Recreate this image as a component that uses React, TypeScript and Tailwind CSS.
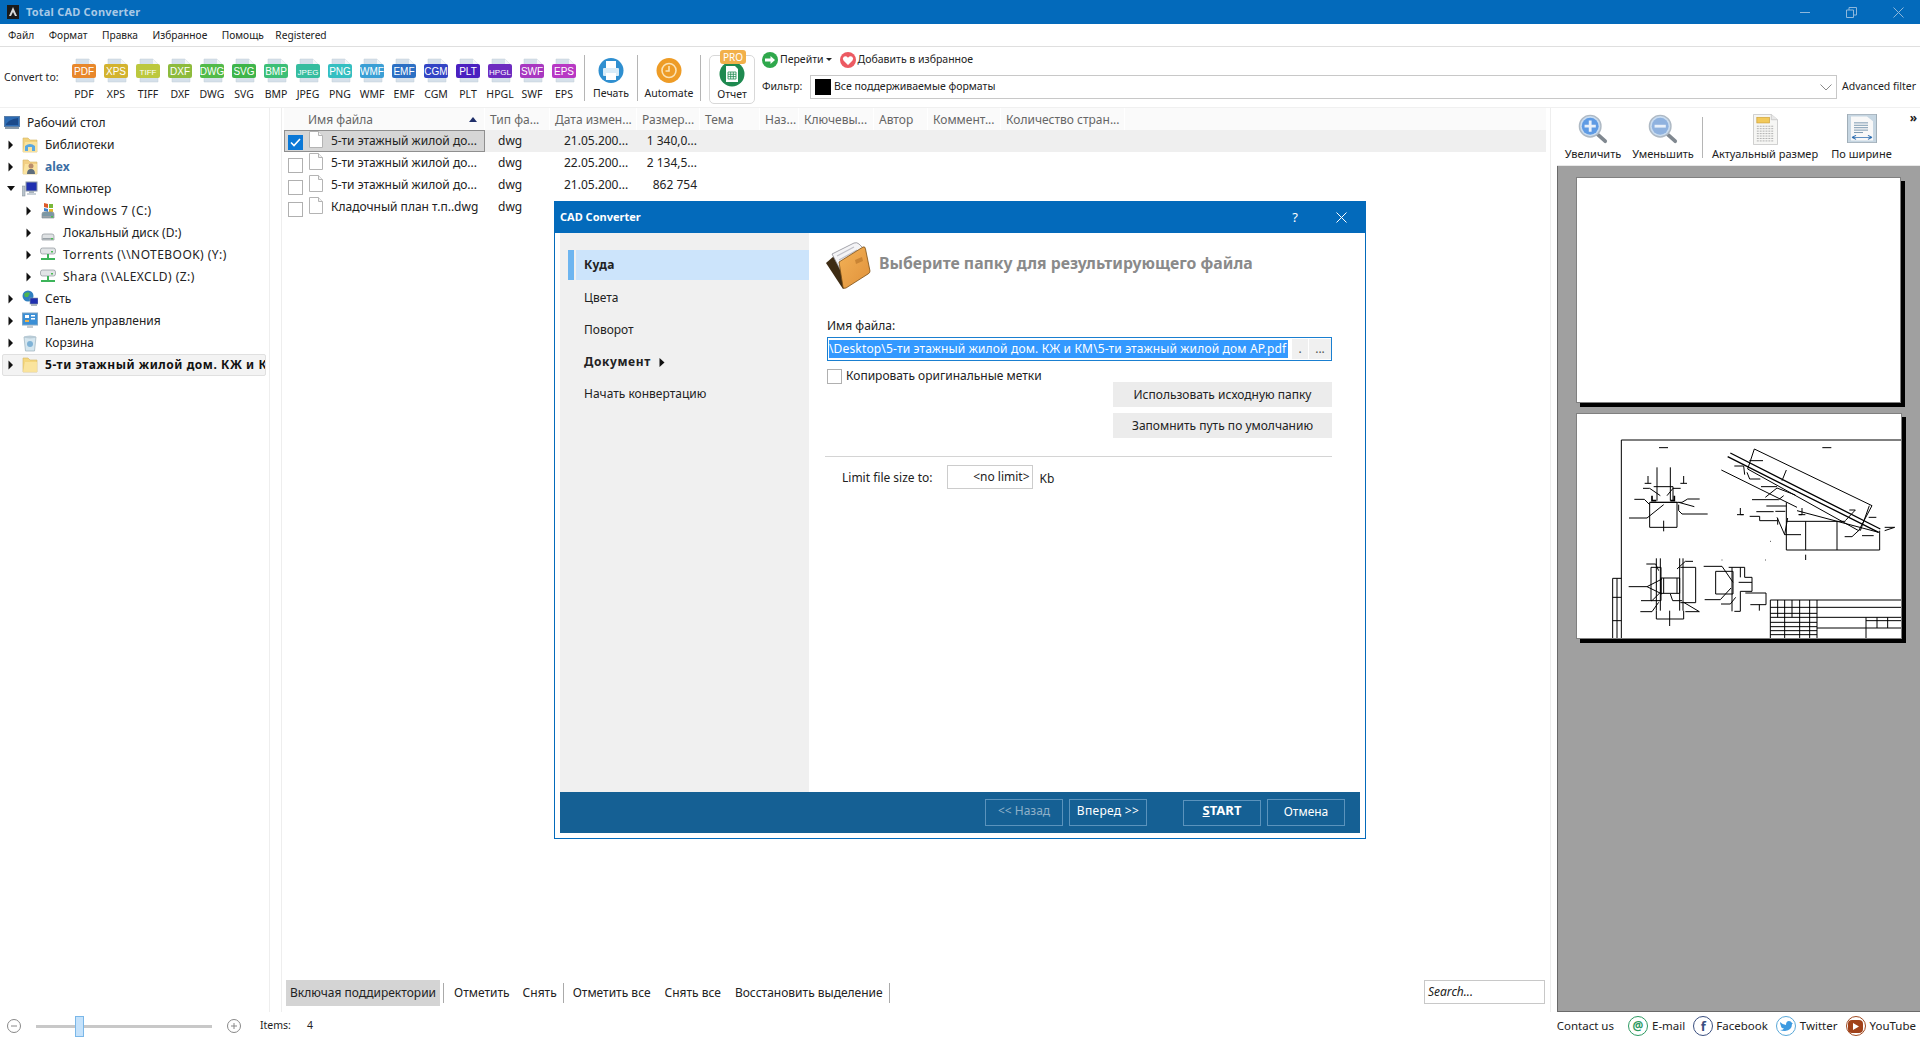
import React from "react"

const formats = [
  { name: "PDF", color: "#e8872b" },
  { name: "XPS", color: "#d3b32f" },
  { name: "TIFF", color: "#bcc83e" },
  { name: "DXF", color: "#8dbb3d" },
  { name: "DWG", color: "#52ba49" },
  { name: "SVG", color: "#3fb54b" },
  { name: "BMP", color: "#3cbf76" },
  { name: "JPEG", color: "#36bd9f" },
  { name: "PNG", color: "#34bfc1" },
  { name: "WMF", color: "#3b9fd5" },
  { name: "EMF", color: "#2d70c4" },
  { name: "CGM", color: "#3344c4" },
  { name: "PLT", color: "#4a20c0" },
  { name: "HPGL", color: "#6d2bc0" },
  { name: "SWF", color: "#a838c0" },
  { name: "EPS", color: "#b838c4" },
]

const columns = ["Имя файла", "Тип фа...", "Дата измен...", "Размер...", "Тема", "Наз...", "Ключевы...", "Автор", "Коммент...", "Количество стран..."]

const files = [
  { name: "5-ти этажный жилой до...", date: "21.05.200...", size: "1 340,0...", checked: true },
  { name: "5-ти этажный жилой до...", date: "22.05.200...", size: "2 134,5...", checked: false },
  { name: "5-ти этажный жилой до...", date: "21.05.200...", size: "862 754", checked: false },
  { name: "Кладочный план т.п..dwg", date: "", size: "", checked: false },
]

const FormatIcon = ({ name, color }: { name: string; color: string }) => (
  <svg width="26" height="25" viewBox="0 0 26 25">
    <path d="M5 1H18L23 6V24H5Z" fill="#d5e0ea" stroke="#c3ccd4" strokeWidth="0.5" />
    <path d="M18 1V6H23Z" fill="#f4f6f8" />
    <rect x="1" y="6" width="24" height="14" rx="2" fill={color} />
    <text x="13" y="17" textAnchor="middle" fontSize={name.length > 3 ? 8 : 10} fill="#fff" fontFamily="'Liberation Sans', sans-serif">{name}</text>
  </svg>
)

const Arrow = ({ open = false }: { open?: boolean }) => (
  <svg width="8" height="10" viewBox="0 0 8 10" className="shrink-0">
    {open ? <path d="M0 2H8L4 7Z" fill="#111" /> : <path d="M1.5 0.5L6 5L1.5 9.5Z" fill="#111" />}
  </svg>
)

const FolderIcon = ({ tint = "#f5d77e", children }: { tint?: string; children?: React.ReactNode }) => (
  <svg width="16" height="18" viewBox="0 0 16 18">
    <path d="M1 2H6L8 4H15V16H1Z" fill={tint} stroke="#d3b566" strokeWidth="0.6" />
    <path d="M1 16L3 6H15V16Z" fill="#fbe7a6" opacity="0.8" />
    {children}
  </svg>
)

const DesktopIcon = () => (
  <svg width="16" height="14" viewBox="0 0 16 14">
    <rect x="0.5" y="0.5" width="15" height="10" fill="#2d6cb4" stroke="#5a7ea8" />
    <path d="M2 8C5 4 9 3 14 2V9H2Z" fill="#1c4a8a" />
    <rect x="1" y="11" width="14" height="2" fill="#8b9aa8" />
  </svg>
)

const LibIcon = () => (
  <FolderIcon tint="#f2d27c">
    <path d="M3 15V10Q8 6 13 10V15H10V11H6V15Z" fill="#5aa7e0" />
  </FolderIcon>
)

const UserIcon = () => (
  <FolderIcon tint="#f2cf85">
    <circle cx="9" cy="8" r="2.5" fill="#b98d6c" />
    <path d="M5 16Q5 11 9 11Q13 11 13 16Z" fill="#5e6d7c" />
  </FolderIcon>
)

const ComputerIcon = () => (
  <svg width="16" height="16" viewBox="0 0 16 16">
    <rect x="0.5" y="5" width="2.5" height="10" fill="#b9c3cc" stroke="#7f8b96" strokeWidth="0.5" />
    <rect x="4" y="1" width="11" height="9" fill="#1f2fb0" stroke="#8b98a6" />
    <rect x="7" y="10" width="5" height="2" fill="#aab4bd" />
    <rect x="5" y="12" width="9" height="2" fill="#c9d1d8" />
  </svg>
)

const DriveIcon = ({ windows = false }: { windows?: boolean }) => (
  <svg width="16" height="18" viewBox="0 0 16 18">
    {windows && (
      <g>
        <path d="M4 1L8 2V6L4 5Z" fill="#dd5a2a" />
        <path d="M9 2L13 2V6L9 6Z" fill="#79b83a" />
        <path d="M4 6L8 7V10L4 9Z" fill="#3d82cc" />
        <path d="M9 7L13 7V10L9 10Z" fill="#e8b92a" />
      </g>
    )}
    <path d="M2 12Q2 10 4 10H12Q14 10 14 12V16H2Z" fill={windows ? "#7b98a5" : "#dfe2e4"} stroke="#8d9499" strokeWidth="0.7" />
    <rect x="2.5" y="14" width="11" height="1.5" fill="#9aa2a8" />
    <rect x="11" y="14" width="2" height="1.5" fill="#4bbd52" />
  </svg>
)

const NetDriveIcon = () => (
  <svg width="16" height="16" viewBox="0 0 16 16">
    <rect x="0.5" y="1" width="15" height="6" rx="2" fill="#e1e4e6" stroke="#8d9499" strokeWidth="0.7" />
    <rect x="11" y="4" width="2" height="1.5" fill="#4bbd52" />
    <path d="M7 7H9V11H15V13H1V11H7Z" fill="#3db45a" />
  </svg>
)

const NetworkIcon = () => (
  <svg width="16" height="18" viewBox="0 0 16 18">
    <circle cx="6" cy="6" r="5.5" fill="#2f7fc0" />
    <path d="M2 4Q5 1 8 3L6 7L3 7Z" fill="#4db54e" />
    <rect x="8" y="8" width="8" height="6" fill="#1f2fb0" stroke="#8b98a6" strokeWidth="0.6" />
    <rect x="9" y="14" width="6" height="2" fill="#aab4bd" />
  </svg>
)

const PanelIcon = () => (
  <svg width="16" height="18" viewBox="0 0 16 18">
    <rect x="0.5" y="1" width="15" height="12" fill="#3b8fd6" stroke="#7ea6c6" />
    <rect x="3" y="3" width="4" height="3" fill="#fff" />
    <rect x="9" y="3" width="4" height="1.5" fill="#fff" />
    <rect x="9" y="6" width="4" height="1.5" fill="#fff" />
    <rect x="3" y="8" width="4" height="2" fill="#f0b44a" />
    <rect x="5" y="13" width="6" height="3" fill="#c4ccd3" />
  </svg>
)

const BinIcon = () => (
  <svg width="16" height="18" viewBox="0 0 16 18">
    <path d="M2 3H14L12.5 17H3.5Z" fill="#d5e6ef" stroke="#9bb0bc" strokeWidth="0.7" />
    <ellipse cx="8" cy="3" rx="6" ry="1.5" fill="#b8cbd6" />
    <circle cx="8" cy="10" r="3" fill="#7fb2d6" />
  </svg>
)

const tree = [
  { label: "Рабочий стол", icon: <DesktopIcon />, level: 0, noArrow: true },
  { label: "Библиотеки", icon: <LibIcon />, level: 1 },
  { label: "alex", icon: <UserIcon />, level: 1, accent: true },
  { label: "Компьютер", icon: <ComputerIcon />, level: 1, open: true },
  { label: "Windows 7 (C:)", icon: <DriveIcon windows />, level: 2, wide: true },
  { label: "Локальный диск (D:)", icon: <DriveIcon />, level: 2 },
  { label: "Torrents (\\\\NOTEBOOK) (Y:)", icon: <NetDriveIcon />, level: 2, wide: true },
  { label: "Shara (\\\\ALEXCLD) (Z:)", icon: <NetDriveIcon />, level: 2, wide: true },
  { label: "Сеть", icon: <NetworkIcon />, level: 1 },
  { label: "Панель управления", icon: <PanelIcon />, level: 1 },
  { label: "Корзина", icon: <BinIcon />, level: 1 },
]

const TreeRow = ({ label, icon, level, noArrow, open, accent, wide }: { label: string; icon: React.ReactNode; level: number; noArrow?: boolean; open?: boolean; accent?: boolean; wide?: boolean }) => (
  <div className={`flex h-[22px] items-center ${level === 2 ? "pl-[25px]" : level === 1 ? "pl-[7px]" : "pl-[4px]"}`}>
    {!noArrow && <Arrow open={open} />}
    <span className={`flex w-[16px] justify-center ${noArrow ? "" : "ml-[7px]"}`}>{icon}</span>
    <span className={`ml-[7px] whitespace-nowrap ${wide ? "tracking-[0.45px]" : ""} ${accent ? "font-bold text-[#3a6ea5]" : "text-[#222]"}`}>{label}</span>
  </div>
)

const FileGlyph = () => (
  <svg width="14" height="17" viewBox="0 0 14 17" className="block shrink-0">
    <path d="M0.5 0.5H9.5L13.5 4.5V16.5H0.5Z" fill="#fff" stroke="#b4b4b4" />
    <path d="M9.5 0.5V4.5H13.5" fill="#f2f2f2" stroke="#b4b4b4" />
  </svg>
)

const Check = ({ checked }: { checked: boolean }) =>
  checked ? (
    <span className="flex h-[15px] w-[15px] shrink-0 items-center justify-center bg-[#0a78d7]">
      <svg width="11" height="9" viewBox="0 0 11 9"><path d="M1 4.5L4 7.5L10 1" fill="none" stroke="#fff" strokeWidth="1.6" /></svg>
    </span>
  ) : (
    <span className="block h-[15px] w-[15px] shrink-0 border border-[#b0b0b0] bg-white" />
  )

const Magnifier = ({ plus }: { plus: boolean }) => (
  <svg width="30" height="30" viewBox="0 0 32 32">
    <path d="M20 21L29 29" stroke="#808890" strokeWidth="4" strokeLinecap="round" />
    <circle cx="13" cy="13" r="11.5" fill="#c9dcf0" stroke="#aeb9c4" strokeWidth="1.5" />
    <circle cx="13" cy="13" r="9" fill={plus ? "#5f9be4" : "#8fb2df"} />
    <path d={plus ? "M7 13H19M13 7V19" : "M7 13H19"} stroke="#e8f0fa" strokeWidth="3" />
  </svg>
)

const ActualSizeIcon = () => (
  <svg width="25" height="31" viewBox="0 0 26 38" preserveAspectRatio="none">
    <path d="M0.5 0.5H19L25.5 7V37.5H0.5Z" fill="#f6f6f4" stroke="#c8c8c8" />
    <path d="M19 0.5V7H25.5" fill="#e8e8e8" stroke="#c8c8c8" />
    <rect x="4" y="4" width="13" height="7" fill="#f2c95a" stroke="#c89b32" strokeWidth="0.7" />
    <path d="M4 15H22M4 18H22M4 21H22M4 24H22M4 27H22M4 30H22M4 33H22" stroke="#a8a8a8" strokeWidth="1" strokeDasharray="2 1" />
  </svg>
)

const FitWidthIcon = () => (
  <svg width="30" height="29" viewBox="0 0 30 36" preserveAspectRatio="none">
    <rect x="0.5" y="0.5" width="29" height="35" fill="#c6d6e2" stroke="#a0aeb8" />
    <path d="M4 3H20L26 9V33H4Z" fill="#f8f8f8" />
    <path d="M7 11H21M7 14H21M7 17H21M7 20H21M7 23H16" stroke="#6f8fa8" strokeWidth="1" />
    <path d="M5 29H25M5 29L9 26.5M5 29L9 31.5M25 29L21 26.5M25 29L21 31.5" stroke="#2b6cb0" strokeWidth="1.2" fill="none" />
  </svg>
)

const PrintIcon = () => (
  <svg width="26" height="30" viewBox="0 0 26 30">
    <circle cx="13" cy="14.500" r="12.500" fill="#2f8fd0" />
    <rect x="8" y="5" width="10" height="7" fill="#fff" />
    <rect x="5" y="12" width="16" height="8" rx="1" fill="#d9ecf8" />
    <rect x="8" y="17" width="10" height="7" fill="#fff" />
  </svg>
)

const AutomateIcon = () => (
  <svg width="26" height="30" viewBox="0 0 26 30">
    <circle cx="13" cy="14.500" r="12.500" fill="#ee9c26" />
    <circle cx="13" cy="14.500" r="7" fill="none" stroke="#fbe3b5" strokeWidth="1.600" />
    <path d="M13 10V15H9.500" fill="none" stroke="#fbe3b5" strokeWidth="1.600" />
  </svg>
)

const ReportIcon = () => (
  <svg width="26" height="26" viewBox="0 0 26 26">
    <circle cx="13" cy="13" r="12.500" fill="#1f8a50" />
    <path d="M7 5H16L19 8V21H7Z" fill="#fff" />
    <path d="M9 11H17V18H9ZM9 13.300H17M9 15.600H17M11.700 11V18M14.300 11V18" fill="none" stroke="#1f8a50" strokeWidth="0.8" />
  </svg>
)

const GoIcon = () => (
  <svg width="16" height="16" viewBox="0 0 16 16">
    <circle cx="8" cy="8" r="8" fill="#2fa84c" />
    <path d="M3 6.500H8.500V4L13 8L8.500 12V9.500H3Z" fill="#fff" />
  </svg>
)

const HeartIcon = () => (
  <svg width="16" height="16" viewBox="0 0 16 16" className="block">
    <circle cx="8" cy="8" r="8" fill="#ec5a62" />
    <path d="M8 13L3.500 8.500Q2 6.500 3.800 4.800Q6 3.500 8 5.800Q10 3.500 12.200 4.800Q14 6.500 12.500 8.500Z" fill="#fff" />
  </svg>
)

const TitleLogo = () => (
  <svg width="12" height="14" viewBox="0 0 12 14">
    <rect width="12" height="14" fill="#1a1a1a" />
    <path d="M6 2L2 11H4L6 7L8 11H10Z" fill="#d8d8d8" />
  </svg>
)

const BigFolder = () => (
  <svg width="46" height="50" viewBox="0 0 46 50">
    <defs>
      <linearGradient id="folderFront" x1="0" y1="0" x2="1" y2="1">
        <stop offset="0" stopColor="#f3b257" />
        <stop offset="1" stopColor="#e0913a" />
      </linearGradient>
    </defs>
    <path d="M1 22L9 15L24 44L18 48Z" fill="#3e2c14" />
    <path d="M7 13L29 2Q32 1 34 3L40 9L17 32Z" fill="#f4f4f6" stroke="#8d8d95" strokeWidth="0.8" />
    <path d="M12 15L29 6M14 19L32 9" stroke="#c0c0c8" strokeWidth="1.200" />
    <path d="M14 21L38 6Q40 5 40.500 8L45 30Q45 32 43 33L21 47Q18 48 18 46Z" fill="url(#folderFront)" stroke="#7a4e14" strokeWidth="0.8" />
    <path d="M30 19L37 16L38 20L31 23Z" fill="#c98434" />
  </svg>
)

const CircleSymbol = ({ color, children }: { color: string; children: React.ReactNode }) => (
  <span className="flex h-[20px] w-[20px] items-center justify-center rounded-full border-[1.5px]" style={{ borderColor: color }}>
    {children}
  </span>
)

const Drawing = () => (
  <svg width="325" height="225" viewBox="80 40 975 675" className="block">
    <g fill="none" stroke="#000" strokeWidth="3">
      <path d="M213 715V118H1053" />
      <path d="M187 715V533H213M187 590H213M187 660H213M200 533V715" />
      <path d="M326 141H353M816 141H843" />
      <path d="M320 200V300M360 200V300M310 258H368V300M298 305H380V380H298ZM340 360V392M293 248V226M283 248H303M400 248V226M390 248H410" />
      <path d="M278 263H298L330 285M391 263H368L350 285M252 296H282L298 312M236 352H290L340 312M412 295H448M412 295L395 305H300M385 312V330L395 340H472M385 305L432 318" />
      <path d="M305 285V300H318M372 285V300H360" strokeWidth="5" />
      <path d="M540 157L990 385M532 168L985 395" strokeWidth="4" />
      <path d="M513 208L740 320M740 330L985 395M612 145L965 315L925 390L592 205Z" />
      <path d="M708 208L695 240M957 315L930 390" />
      <path d="M597 180H638M590 215L598 235H630M552 196H580L583 222M632 258H680M605 297H685L700 285M645 290L680 262M680 262L735 283" />
      <path d="M708 305V448H988V390M766 362V448M860 362V448M708 362H885M766 462V478" />
      <path d="M570 322V342H580M560 342H580M755 322V342H745M765 342H745M618 333H670M598 347H628V360H680M648 316H708M675 332H705" />
      <path d="M680 350L703 402H752M682 352V372M712 352L703 402M883 408H905L930 385M935 405H970M1003 380H1033L1003 390M955 350H978M897 328H915L885 360" />
      <path d="M660 422H662M514 478H516M645 478H647" />
      <path d="M318 473V630M330 473V630M388 473V630M398 473V630M302 500H332V600H302ZM390 500H436V606H390M332 532H388V578H332ZM340 532V578M380 532V578M318 630V655H400V630M358 630V676" />
      <path d="M288 490H316L325 510M428 482H405L380 505M235 558H290M290 558L335 535M290 558L335 580M272 600H305L330 575M270 633H305L325 605M405 633H447L400 605M360 580L367 600H395" />
      <path d="M535 500H583V530H605V572H570V632H552M545 500V632M570 500V530M496 512H548V580H496ZM460 497H515L548 545M463 597H510L542 562M512 610H540L556 590M585 577H647V612H600M627 612V630M565 545H605" />
      <path d="M660 598H1053M660 598V715M660 620H800M660 638H800M660 650H800M660 665H800M660 678H800M660 690H800M660 702H800M682 598V650M703 598V715M725 598V650M748 598V715M778 598V715M800 598V715M800 620H1053M800 650H1053M947 650V715M800 682H1053M980 650V682M1012 650V682M947 660H1053" />
    </g>
  </svg>
)

const App = () => {
  return (
    <div className="relative flex h-[1040px] w-[1920px] flex-col overflow-hidden bg-white font-['Noto_Sans',sans-serif] text-[10.5px] text-[#222]">
      {/* title bar */}
      <div className="flex h-[24px] shrink-0 items-center bg-[#036abb] pl-[7px]">
        <TitleLogo />
        <span className="ml-[7px] text-[11px] font-bold tracking-[0.2px] text-[#a9c9e6]">Total CAD Converter</span>
        <div className="ml-auto flex items-center gap-[36px] pr-[16px]">
          <span className="h-px w-[10px] bg-[#8fb8dc]" />
          <svg width="11" height="11" viewBox="0 0 11 11"><path d="M0.5 3H7.500V10.500H0.5ZM3 3V0.5H10.500V8H7.500" fill="none" stroke="#8fb8dc" /></svg>
          <svg width="11" height="11" viewBox="0 0 11 11"><path d="M0.5 0.5L10.500 10.500M10.500 0.5L0.5 10.500" stroke="#8fb8dc" /></svg>
        </div>
      </div>

      {/* menu */}
      <div className="flex h-[23px] shrink-0 items-center gap-[14.5px] border-b border-[#dfdfdf] pl-[8px] pt-[1px] text-[10.2px]">
        {["Файл", "Формат", "Правка", "Избранное", "Помощь"].map(v => <span key={v}>{v}</span>)}
        <span className="-ml-[3px]">Registered</span>
      </div>

      {/* toolbar */}
      <div className="flex h-[61px] shrink-0 items-stretch border-b border-[#f0f0f0]">
        <div className="flex w-[68px] items-center pl-[4px] pt-[2px]">Convert to:</div>
        <div className="flex">
          {formats.map(f => (
            <div key={f.name} className="flex w-[32px] flex-col items-center pt-[11px]">
              <FormatIcon {...f} />
              <span className="mt-[4px] leading-[14px]">{f.name}</span>
            </div>
          ))}
        </div>
        <div className="ml-[4px] mt-[8px] h-[46px] w-px bg-[#b5b5b5]" />
        <div className="flex w-[52px] flex-col items-center pt-[9px]">
          <PrintIcon />
          <span className="leading-[14px]">Печать</span>
        </div>
        <div className="mt-[8px] h-[46px] w-px bg-[#b5b5b5]" />
        <div className="flex w-[62px] flex-col items-center pt-[9px]">
          <AutomateIcon />
          <span className="leading-[14px]">Automate</span>
        </div>
        <div className="mt-[8px] h-[46px] w-px bg-[#b5b5b5]" />
        <div className="relative ml-[8px] mt-[8px] flex h-[49px] w-[46px] flex-col items-center rounded-[5px] border border-[#d8d8d8] pt-[5px]">
          <span className="absolute -top-[6px] left-[10px] rounded-[3px] bg-[#f2b04a] px-[3px] text-[10px] leading-[14px] text-white">PRO</span>
          <ReportIcon />
          <span className="leading-[14px]">Отчет</span>
        </div>
        <div className="ml-[7px] flex flex-1 flex-col">
          <div className="mt-[3px] flex h-[20px] items-center">
            <GoIcon />
            <span className="ml-[2px]">Перейти</span>
            <svg width="7" height="4" viewBox="0 0 7 4" className="ml-[2px]"><path d="M0 0H6L3 3Z" fill="#222" /></svg>
            <span className="ml-[7px]"><HeartIcon /></span>
            <span className="ml-[2px]">Добавить в избранное</span>
          </div>
          <div className="mt-[5px] flex items-center">
            <span className="w-[48px]">Фильтр:</span>
            <div className="flex h-[24px] w-[1027px] items-center border-[1.5px] border-[#c8c8c8] pl-[4px] pr-[4px]">
              <span className="h-[16px] w-[16px] bg-black" />
              <span className="ml-[3px]">Все поддерживаемые форматы</span>
              <svg width="12" height="7" viewBox="0 0 12 7" className="ml-auto"><path d="M0.5 0.5L6 6L11.500 0.5" fill="none" stroke="#8a8a8a" /></svg>
            </div>
            <span className="ml-[5px] whitespace-nowrap">Advanced filter</span>
          </div>
        </div>
      </div>

      {/* main */}
      <div className="flex h-[904px] shrink-0 text-[12px]">
        <div className="w-[270px] shrink-0 border-r border-[#eeeeee] pt-[4px]">
          {tree.map(t => <TreeRow key={t.label} {...t} />)}
          <div className="ml-[2px] flex h-[22px] w-[264px] items-center overflow-hidden rounded-[2px] border border-[#e0e0e0] bg-[#f3f3f3] pl-[4px]">
            <Arrow />
            <span className="ml-[7px] w-[16px]"><FolderIcon /></span>
            <span className="ml-[7px] whitespace-nowrap font-bold tracking-[0.55px] text-[#111]">5-ти этажный жилой дом. КЖ и КМ</span>
          </div>
        </div>

        <div className="ml-[11px] flex w-[1270px] shrink-0 flex-col border-x border-[#eeeeee]">
          <div className="pl-[2px] pr-[4px]">
            <div className="grid h-[22px] grid-cols-[201px_65px_87px_63px_60px_39px_75px_54px_73px_124px] items-center bg-[#fafafa] text-[#666]">
              {columns.map((c, i) => (
                <div key={c} className={`flex h-full items-center border-r border-white pt-[1px] ${i === 0 ? "justify-between pl-[24px] pr-[7px]" : "pl-[5px]"}`}>
                  <span className="whitespace-nowrap">{c}</span>
                  {i === 0 && <svg width="8" height="5" viewBox="0 0 8 5"><path d="M0 5H8L4 0Z" fill="#1f2f6a" /></svg>}
                </div>
              ))}
            </div>
            {files.map((f, i) => (
              <div key={i} className={`flex h-[22px] items-center ${i === 0 ? "bg-[#efefef]" : ""}`}>
                <div className={`flex h-[22px] w-[201px] items-center ${i === 0 ? "border border-[#8f8f8f] bg-[#d6d6d6] pl-[3px]" : "pl-[4px]"}`}>
                  <span className={i === 0 ? "mt-[2px]" : "mt-[4px]"}><Check checked={f.checked} /></span>
                  <span className="-mt-[3px] ml-[6px]"><FileGlyph /></span>
                  <span className="ml-[8px] whitespace-nowrap">{f.name}</span>
                </div>
                <span className="w-[65px] pl-[13px]">dwg</span>
                <span className="w-[87px] pl-[14px]">{f.date}</span>
                <span className="w-[63px] pr-[3px] text-right">{f.size}</span>
              </div>
            ))}
          </div>

          <div className="mt-auto mb-[6px] flex h-[26px] items-center pl-[4px] leading-none">
            <span className="flex h-[26px] w-[154px] items-center justify-center bg-[#d4d4d4]">Включая поддиректории</span>
            <span className="ml-[3px] h-[20px] w-px bg-[#aaaaaa]" />
            <span className="ml-[10px]">Отметить</span>
            <span className="ml-[13px]">Снять</span>
            <span className="ml-[6px] h-[20px] w-px bg-[#aaaaaa]" />
            <span className="ml-[9px]">Отметить все</span>
            <span className="ml-[14px]">Снять все</span>
            <span className="ml-[14px]">Восстановить выделение</span>
            <span className="ml-[6px] h-[20px] w-px bg-[#aaaaaa]" />
            <span className="ml-auto mr-[5px] -mt-[2px] flex h-[24px] w-[121px] items-center border border-[#c8c8c8] pl-[3px] italic">Search...</span>
          </div>
        </div>

        <div className="ml-[6px] flex flex-1 flex-col">
          <div className="relative flex h-[58px] shrink-0 items-start border-b border-[#e8e8e8] pt-[6px] text-[11px]">
            <div className="ml-[7px] flex w-[58px] flex-col items-center">
              <span className="h-[32px]"><Magnifier plus /></span>
              <span className="whitespace-nowrap leading-[16px]">Увеличить</span>
            </div>
            <div className="ml-[9px] flex w-[64px] flex-col items-center">
              <span className="h-[32px]"><Magnifier plus={false} /></span>
              <span className="whitespace-nowrap leading-[16px]">Уменьшить</span>
            </div>
            <span className="ml-[7px] mt-[3px] h-[41px] w-px bg-[#b5b5b5]" />
            <div className="ml-[7px] flex w-[110px] flex-col items-center">
              <span className="h-[32px]"><ActualSizeIcon /></span>
              <span className="whitespace-nowrap leading-[16px]">Актуальный размер</span>
            </div>
            <div className="ml-[10px] flex w-[63px] flex-col items-center">
              <span className="h-[32px]"><FitWidthIcon /></span>
              <span className="whitespace-nowrap leading-[16px]">По ширине</span>
            </div>
            <span className="absolute right-[3px] top-[3px] text-[12px] font-bold leading-[14px]">»</span>
          </div>
          <div className="flex-1 border-b border-l border-[#6a6a6a] bg-[#a0a0a0] pl-[18px] pt-[11px]">
            <div className="h-[226px] w-[325px] border border-[#808080] bg-white shadow-[4px_4px_0_#000]" />
            <div className="mt-[10px] h-[226px] w-[326px] overflow-hidden border border-[#808080] bg-white shadow-[4px_4px_0_#000]">
              <Drawing />
            </div>
          </div>
        </div>
      </div>

      {/* status bar */}
      <div className="flex h-[28px] shrink-0 items-center text-[11.5px]">
        <svg width="14" height="14" viewBox="0 0 14 14" className="ml-[7px] shrink-0"><circle cx="7" cy="7" r="6.500" fill="none" stroke="#888" /><path d="M4 7H10" stroke="#888" /></svg>
        <div className="relative ml-[15px] h-[3px] w-[176px] shrink-0 bg-[#c8c8c8]">
          <span className="absolute -top-[9px] left-[39px] h-[21px] w-[9px] border border-[#7ab7e8] bg-[#c5e2fb]" />
        </div>
        <svg width="14" height="14" viewBox="0 0 14 14" className="ml-[15px] shrink-0"><circle cx="7" cy="7" r="6.500" fill="none" stroke="#888" /><path d="M4 7H10M7 4V10" stroke="#888" /></svg>
        <span className="ml-[19px] text-[10.5px]">Items:</span>
        <span className="ml-[16px] text-[10.5px]">4</span>
        <div className="ml-auto flex items-center whitespace-nowrap pr-[4px]">
          <span>Contact us</span>
          <span className="ml-[14px]"><CircleSymbol color="#2d9a62"><span className="text-[12px] font-bold leading-none text-[#2d9a62]">@</span></CircleSymbol></span>
          <span className="ml-[4px]">E-mail</span>
          <span className="ml-[8px]"><CircleSymbol color="#3a4f80"><span className="text-[13px] font-bold leading-none text-[#3a4f80]">f</span></CircleSymbol></span>
          <span className="ml-[3px]">Facebook</span>
          <span className="ml-[8px]">
            <CircleSymbol color="#5aa8d8">
              <svg width="14" height="12" viewBox="0 0 14 12"><path d="M1 2Q4 5 7 5Q7 1 10 1Q12 1 13 3L14 3L13 4Q13 10 6 11Q3 11 1 10Q4 10 5 8.500Q2 8 2 6Q1 4 1 2Z" fill="#3d9ae0" /></svg>
            </CircleSymbol>
          </span>
          <span className="ml-[4px]">Twitter</span>
          <span className="ml-[8px]">
            <CircleSymbol color="#a04a20">
              <span className="flex h-[13px] w-[15px] items-center justify-center rounded-[4px] bg-[#a0421a]">
                <svg width="6" height="7" viewBox="0 0 6 7"><path d="M0 0L6 3.500L0 7Z" fill="#fff" /></svg>
              </span>
            </CircleSymbol>
          </span>
          <span className="ml-[4px]">YouTube</span>
        </div>
      </div>

      {/* dialog */}
      <div className="absolute left-[554px] top-[201px] flex h-[638px] w-[812px] flex-col border border-[#036abb] bg-white text-[12px]">
        <div className="-mx-px -mt-px flex h-[32px] shrink-0 items-center bg-[#036abb] pl-[6px] text-white">
          <span className="text-[11px] font-bold">CAD Converter</span>
          <span className="ml-auto text-[13px] leading-none">?</span>
          <svg width="11" height="11" viewBox="0 0 11 11" className="ml-[38px] mr-[19px]"><path d="M0.5 0.5L10.500 10.500M10.500 0.5L0.5 10.500" stroke="#fff" /></svg>
        </div>
        <div className="flex min-h-0 flex-1 pl-[5px]">
          <div className="w-[249px] shrink-0 bg-[#f0f0f0] pl-[8px] pt-[17px]">
            <div className="flex h-[30px] items-stretch">
              <span className="w-[6px] bg-[#6db5f0]" />
              <span className="ml-[2px] flex flex-1 items-center bg-[#cce4fb] pl-[8px] font-bold tracking-[0.4px]">Куда</span>
            </div>
            <div className="flex h-[32px] items-center pl-[16px] pt-[4px]">Цвета</div>
            <div className="flex h-[32px] items-center pl-[16px] pt-[4px]">Поворот</div>
            <div className="flex h-[32px] items-center pl-[16px] pt-[4px] font-bold tracking-[0.6px]">
              Документ
              <svg width="6" height="9" viewBox="0 0 6 9" className="ml-[8px]"><path d="M0.5 0L5.500 4.500L0.5 9Z" fill="#111" /></svg>
            </div>
            <div className="flex h-[32px] items-center pl-[16px] pt-[4px]">Начать конвертацию</div>
          </div>

          <div className="min-w-0 flex-1 pl-[16px] pr-[33px]">
            <div className="mt-[8px] flex items-center">
              <BigFolder />
              <span className="-mt-[5px] ml-[8px] text-[15.8px] font-bold text-[#8a8a8a]">Выберите папку для результирующего файла</span>
            </div>
            <div className="ml-[2px] mt-[27px] leading-[16px]">Имя файла:</div>
            <div className="ml-[2px] mt-[3px] flex h-[24px] items-center border-[1.5px] border-[#1a7fd0] pl-[1px]">
              <span className="flex h-[18px] w-[459px] items-center overflow-hidden whitespace-nowrap bg-[#3399ff] text-[12px] tracking-[0.15px] text-white">\Desktop\5-ти этажный жилой дом. КЖ и КМ\5-ти этажный жилой дом АР.pdf</span>
              <span className="ml-[4px] flex h-[20px] w-[16px] items-center justify-center bg-[#f0f0f0] text-[#555]">.</span>
              <span className="ml-[1px] flex h-[20px] flex-1 items-center justify-center bg-[#f0f0f0] text-[#555]">...</span>
            </div>
            <div className="ml-[2px] mt-[6px] flex items-center">
              <Check checked={false} />
              <span className="ml-[4px]">Копировать оригинальные метки</span>
            </div>
            <div className="-mt-[3px] flex flex-col items-end">
              <div className="flex h-[25px] w-[219px] items-center justify-center bg-[#ececec]">Использовать исходную папку</div>
              <div className="mt-[6px] flex h-[25px] w-[219px] items-center justify-center bg-[#ececec]">Запомнить путь по умолчанию</div>
            </div>
            <div className="mt-[18px] h-px bg-[#d4d4d4]" />
            <div className="ml-[17px] mt-[8px] flex items-center">
              <span className="mt-[2px]">Limit file size to:</span>
              <span className="ml-[14px] flex h-[24px] w-[86px] items-center justify-end border border-[#cccccc] pr-[2px]">&lt;no limit&gt;</span>
              <span className="ml-[7px] mt-[3px]">Kb</span>
            </div>
          </div>
        </div>
        <div className="mx-[5px] mb-[5px] flex h-[41px] shrink-0 items-center bg-[#156094] pl-[425px] text-white">
          <span className="flex h-[27px] w-[78px] items-center justify-center border border-[#5b93bc] pb-[3px] text-[#8fb0c8]">&lt;&lt; Назад</span>
          <span className="ml-[6px] flex h-[27px] w-[78px] items-center justify-center border border-[#5b93bc] pb-[3px] tracking-[0.3px]">Вперед &gt;&gt;</span>
          <span className="ml-[36px] flex h-[26px] w-[78px] items-center justify-center border border-[#5b93bc] pb-[3px] text-[13px] font-bold"><span className="underline">S</span>TART</span>
          <span className="ml-[6px] flex h-[27px] w-[78px] items-center justify-center border border-[#5b93bc] pb-[1px]">Отмена</span>
        </div>
      </div>
    </div>
  )
}

export default App
